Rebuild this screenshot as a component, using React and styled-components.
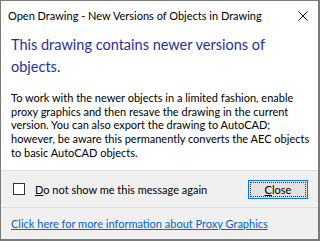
import React from 'react'
import styled, { createGlobalStyle } from 'styled-components'

const Global = createGlobalStyle`
  html, body {
    margin: 0;
    padding: 0;
    background: #ffffff;
  }
  body {
    font-family: Lato, "Noto Sans", sans-serif;
  }
`

const Window = styled.div`
  box-sizing: border-box;
  width: 320px;
  height: 241px;
  border: 1px solid #7a7a7a;
  border-width: 1px 2px 2px 1px;
  background: #ffffff;
  display: flex;
  flex-direction: column;
`

const TitleBar = styled.div`
  height: 29px;
  display: flex;
  align-items: center;
  justify-content: space-between;
  padding: 0 9px 0 7px;
  font-size: 11px;
  color: #000;
  white-space: nowrap;
`

const CloseX = styled.svg`
  width: 10px;
  height: 10px;
  margin-right: 1px;
`

const Content = styled.div`
  flex: 1;
  padding: 4px 10px 0 10px;
`

const Heading = styled.div`
  color: #1f3292;
  font-size: 14.5px;
  line-height: 22px;
  margin-bottom: 13px;
  white-space: nowrap;
`

const Body = styled.p`
  margin: 0;
  font-size: 11px;
  line-height: 13.7px;
  color: #000;
  white-space: nowrap;
`

const Footer = styled.div`
  background: #f0f0f0;
  border-top: 1px solid #dfdfdf;
  height: 36px;
  display: flex;
  align-items: center;
  justify-content: space-between;
  padding: 0 10px 0 12px;
`

const CheckRow = styled.label`
  display: flex;
  align-items: center;
  gap: 10px;
  font-size: 11px;
  color: #000;
  white-space: nowrap;
`

const Box = styled.span`
  box-sizing: border-box;
  width: 12px;
  height: 12px;
  border: 1px solid #333;
  background: #fff;
`

const Key = styled.span`
  text-decoration: underline;
`

const Button = styled.button`
  box-sizing: border-box;
  width: 60px;
  height: 19px;
  padding: 0;
  border: 1px solid #0078d7;
  background: #e1e1e1;
  font-family: inherit;
  font-size: 11px;
  color: #000;
  display: flex;
  align-items: center;
  justify-content: center;
  outline: 1px dotted #333;
  outline-offset: -3px;
`

const LinkBar = styled.div`
  background: #f0f0f0;
  border-top: 1px solid #dfdfdf;
  height: 31px;
  display: flex;
  align-items: center;
  padding: 0 10px;
`

const Link = styled.a`
  color: #0066cc;
  font-size: 11px;
  text-decoration: underline;
  cursor: pointer;
  white-space: nowrap;
`

const bodyLines = [
  'To work with the newer objects in a limited fashion, enable',
  'proxy graphics and then resave the drawing in the current',
  'version. You can also export the drawing to AutoCAD;',
  'however, be aware this permanently converts the AEC objects',
  'to basic AutoCAD objects.',
]

const App = () => {
  return (
    <>
      <Global />
      <Window>
        <TitleBar>
          <span>Open Drawing - New Versions of Objects in Drawing</span>
          <CloseX viewBox="0 0 10 10">
            <path d="M0.5 0.5 L9.5 9.5 M9.5 0.5 L0.5 9.5" stroke="#111" strokeWidth="1" />
          </CloseX>
        </TitleBar>
        <Content>
          <Heading>
            This drawing contains newer versions of
            <br />
            objects.
          </Heading>
          <Body>
            {bodyLines.map((line, i) => (
              <React.Fragment key={i}>
                {line}
                {i < bodyLines.length - 1 && <br />}
              </React.Fragment>
            ))}
          </Body>
        </Content>
        <Footer>
          <CheckRow>
            <Box />
            <span><Key>D</Key>o not show me this message again</span>
          </CheckRow>
          <Button><span><Key>C</Key>lose</span></Button>
        </Footer>
        <LinkBar>
          <Link>Click here for more information about Proxy Graphics</Link>
        </LinkBar>
      </Window>
    </>
  )
}

export default App
